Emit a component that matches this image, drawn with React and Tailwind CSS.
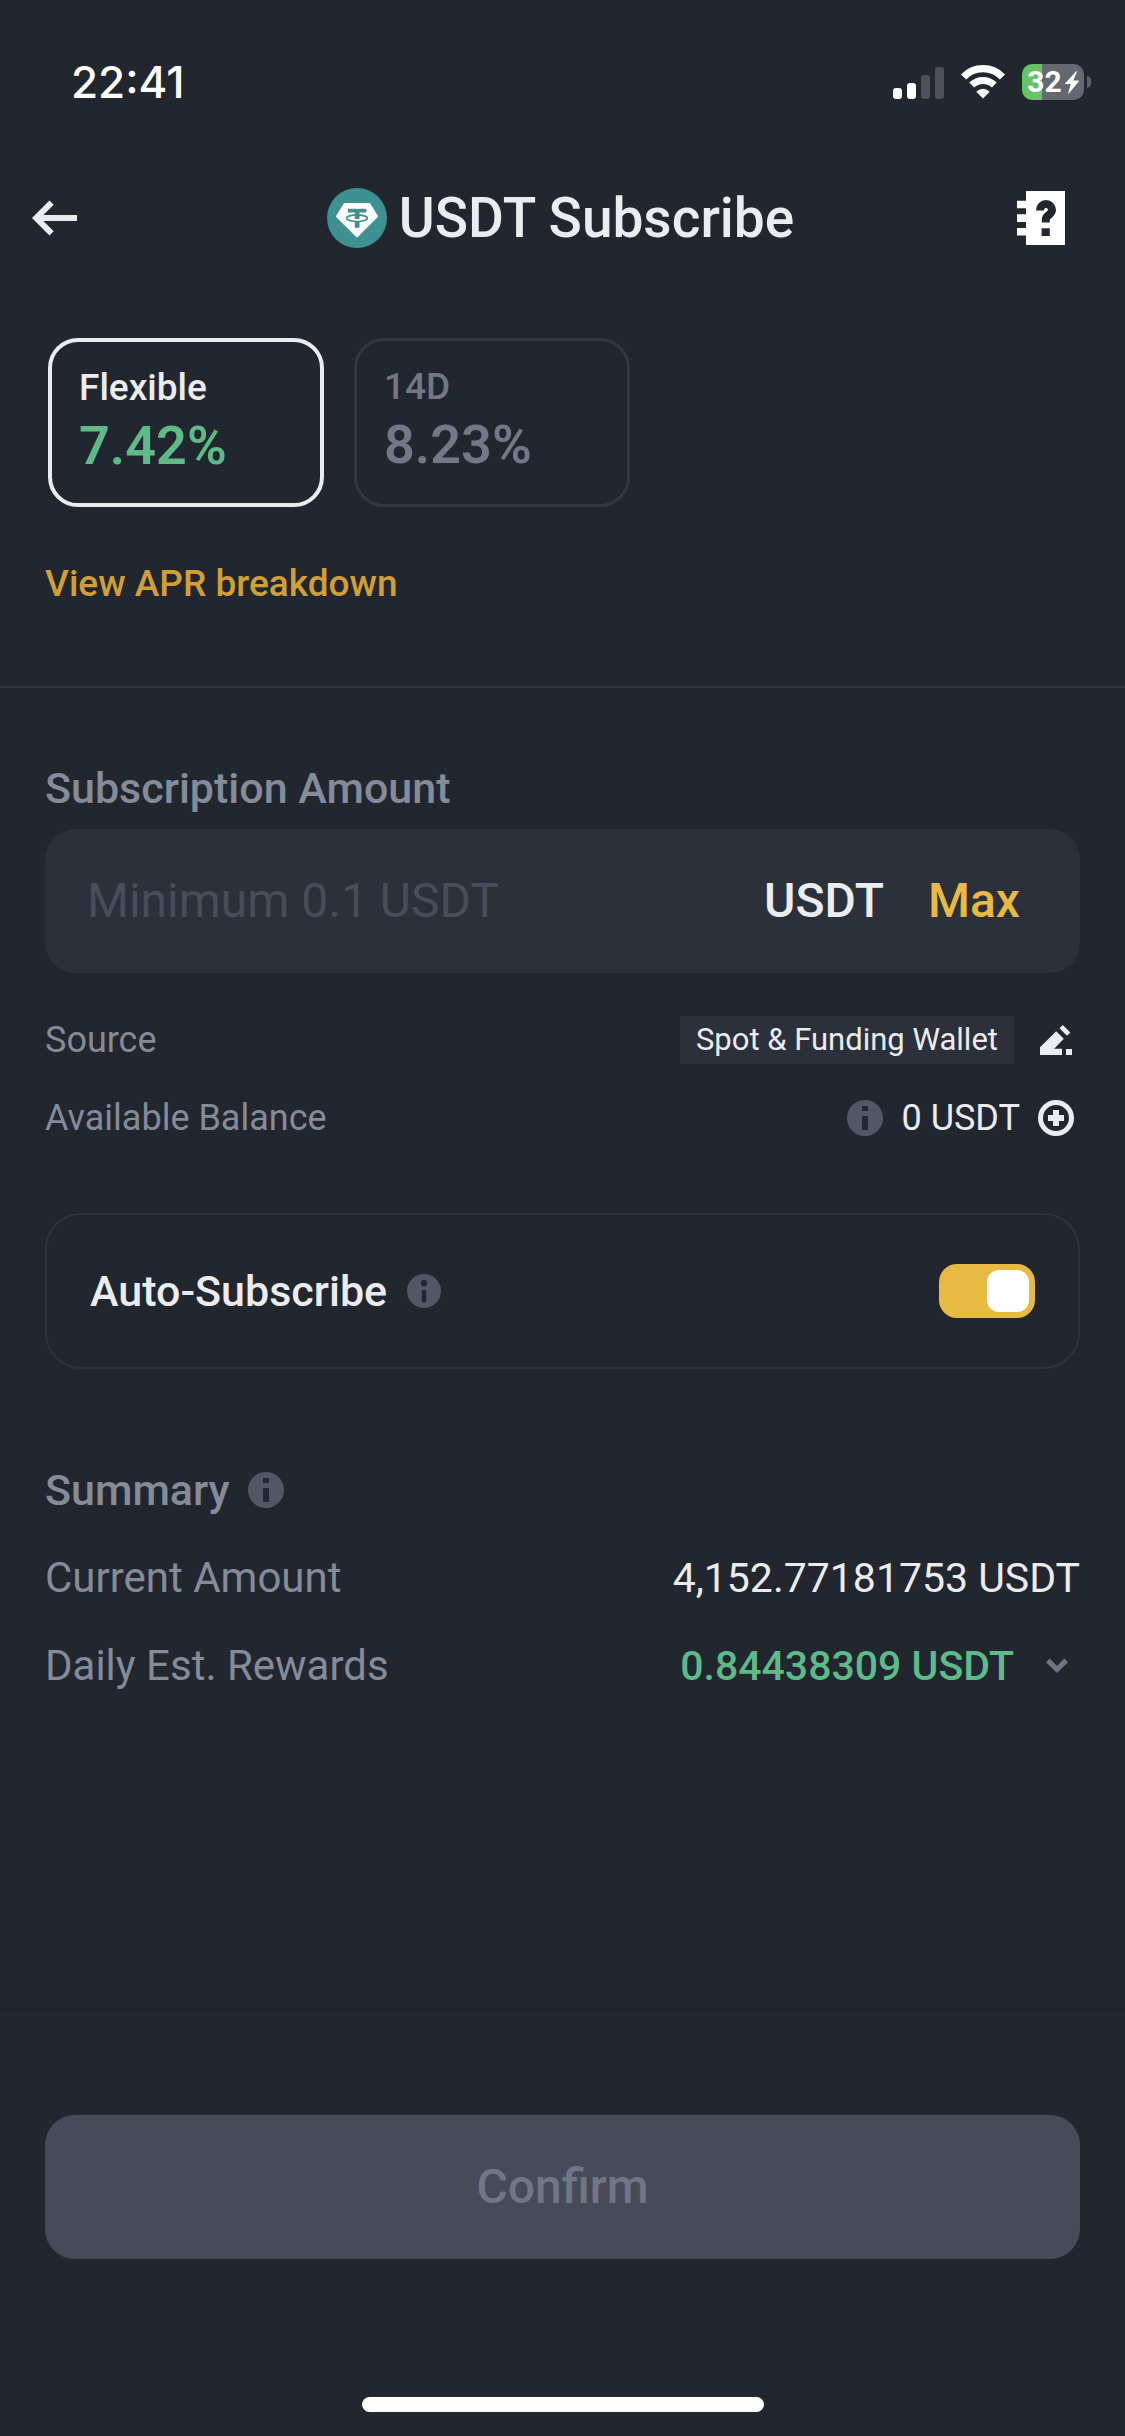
import { useState } from "react";

function SignalIcon() {
  return (
    <svg width="51" height="33" viewBox="0 0 51 33" aria-hidden="true">
      <rect x="0" y="22" width="9" height="11" rx="3" fill="#fff" />
      <rect x="14" y="17" width="9" height="16" rx="3" fill="#fff" />
      <rect x="28" y="9" width="9" height="24" rx="3" fill="#4d5058" />
      <rect x="42" y="1" width="9" height="32" rx="3" fill="#4d5058" />
    </svg>
  );
}

function WifiIcon() {
  return (
    <svg width="46" height="34" viewBox="0 0 46 34" fill="none" aria-hidden="true">
      <path d="M3.600 11.900a27 27 0 0 1 38.800 0" stroke="#fff" strokeWidth="7.200" />
      <path d="M11.700 20.100a16 16 0 0 1 22.600 0" stroke="#fff" strokeWidth="7" />
      <path d="M23 33.400 16.300 26.800q6.700-6 13.400 0Z" fill="#fff" />
    </svg>
  );
}

function BatteryIcon() {
  return (
    <div className="flex items-center gap-[3px]" aria-label="Battery 32 percent, charging">
      <div className="flex h-9 w-[62px] items-center justify-center gap-[3px] rounded-[10px] bg-[linear-gradient(90deg,#65c466_0_20px,#66686f_20px)] text-[30px] leading-9 font-bold text-white">
        32
        <svg width="14" height="23" viewBox="0 0 14 23" fill="#fff" aria-hidden="true">
          <path d="M11.200.3.300 12.200q-.5.900.5.900h5L3.200 22q0 .9.800.3L13.800 10.600q.5-1-.5-1H8.200L12 .8q0-.9-.8-.5Z" />
        </svg>
      </div>
      <svg width="4" height="12" viewBox="0 0 4 12" fill="#5d6068" aria-hidden="true">
        <path d="M0 0a6.200 6.200 0 0 1 0 12Z" />
      </svg>
    </div>
  );
}

function ArrowLeftIcon() {
  return (
    <svg width="46" height="36" viewBox="0 0 46 36" fill="none" stroke="#eaecef" strokeWidth="6" aria-hidden="true">
      <path d="M19.600 2.600 4.200 18l15.400 15.400" />
      <path d="M6 18h39" />
    </svg>
  );
}

function TetherIcon() {
  return (
    <svg width="60" height="60" viewBox="0 0 60 60" aria-hidden="true">
      <circle cx="30" cy="30" r="30" fill="#3f9090" />
      <path d="M17.800 15h24.400q.8 0 1.200.7l7.400 12q.5.900-.2 1.600L31 48.800q-1 .9-2 0L9.400 29.300q-.7-.7-.2-1.600l7.400-12q.4-.7 1.200-.7Z" fill="#fff" />
      <path d="M21 20.800h18.300v3.700H21Z" fill="#3f9090" />
      <path d="M27.800 23h4.700v8h-4.700ZM27.800 33h4.700v6.800h-4.700Z" fill="#3f9090" />
      <ellipse cx="30" cy="30.200" rx="10.300" ry="3.300" fill="none" stroke="#3f9090" strokeWidth="1.600" />
    </svg>
  );
}

function GuideIcon() {
  return (
    <svg width="48" height="54" viewBox="0 0 48 54" aria-hidden="true">
      <path d="M9 0h39v54H9ZM0 9.700h9v7.600H0ZM0 23.300h9V31H0ZM0 37h9v7.600H0Z" fill="#fff" />
      <path d="M23 19.500V19a6 6 0 0 1 12 0c0 5-6.200 5-6.200 9.500v3" fill="none" stroke="#22262e" strokeWidth="8" />
      <path d="M24.600 37.300h8.200V45h-8.200Z" fill="#22262e" />
    </svg>
  );
}

function InfoIcon() {
  return (
    <svg width="36" height="36" viewBox="0 0 36 36" aria-hidden="true">
      <circle cx="18" cy="18" r="18" fill="#515765" />
      <path d="M15 6h6v5h-6ZM15 16h6v14h-6Z" fill="#22262e" />
    </svg>
  );
}

function InfoRoundIcon() {
  return (
    <svg width="34" height="34" viewBox="0 0 34 34" aria-hidden="true">
      <circle cx="17" cy="17" r="17" fill="#515765" />
      <circle cx="17" cy="9.300" r="3.200" fill="#22262e" />
      <rect x="14.800" y="16" width="4.400" height="12.500" rx="0.800" fill="#22262e" />
    </svg>
  );
}

function EditIcon() {
  return (
    <svg width="32" height="30" viewBox="0 0 32 30" fill="#eaecef" aria-hidden="true">
      <path d="M0 30v-7.800L16.200 6.200l7.600 7.600L14.200 23.800H22V30ZM22.800 0l7.600 7.500-3.300 3.300-7.600-7.600ZM26 24h6v6h-6Z" />
    </svg>
  );
}

function AddIcon() {
  return (
    <svg width="36" height="36" viewBox="0 0 36 36" fill="none" stroke="#eaecef" aria-hidden="true">
      <circle cx="18" cy="18" r="15.500" strokeWidth="5" />
      <path d="M10 18h16M18 10v16" strokeWidth="6" />
    </svg>
  );
}

function ChevronDownIcon() {
  return (
    <svg width="22" height="16" viewBox="0 0 22 16" fill="none" stroke="#707485" strokeWidth="5" aria-hidden="true">
      <path d="m1.800 2.400 9.200 9 9.200-9" />
    </svg>
  );
}

const plans = [
  { id: "flexible", name: "Flexible", apr: "7.42%" },
  { id: "14d", name: "14D", apr: "8.23%" },
];

function PlanCard({ plan, selected, onSelect }) {
  return (
    <button
      type="button"
      aria-pressed={selected}
      onClick={onSelect}
      className={
        "flex w-[276px] flex-col rounded-[30px] px-[27px] pt-[22px] pb-[23px] text-left " +
        (selected ? "border-4 border-[#eaecef]" : "border-[3px] border-[#333742]")
      }
    >
      <span className={"text-[37px] leading-[48px] font-medium " + (selected ? "text-[#eaecef]" : "text-[#737787]")}>
        {plan.name}
      </span>
      <span className={"text-[54px] leading-[68px] font-semibold " + (selected ? "text-[#5fba89]" : "text-[#737787]")}>
        {plan.apr}
      </span>
    </button>
  );
}

export default function App() {
  const [plan, setPlan] = useState("flexible");
  const [amount, setAmount] = useState("");
  const [auto, setAuto] = useState(true);

  return (
    <div className="flex min-h-screen flex-col bg-[#22262e] font-[Roboto,sans-serif] text-[#eaecef]">
      <div className="flex h-[164px] items-center justify-between pr-[34px] pl-[71px]">
        <time className="font-[Inter,sans-serif] text-[44px] leading-[56px] font-medium text-white">22:41</time>
        <div className="flex items-center gap-4">
          <SignalIcon />
          <WifiIcon />
          <BatteryIcon />
        </div>
      </div>

      <header className="grid h-[108px] grid-cols-[1fr_auto_1fr] items-center pr-[60px] pl-8">
        <button type="button" aria-label="Back" className="justify-self-start">
          <ArrowLeftIcon />
        </button>
        <div className="flex items-center gap-3 pl-6">
          <TetherIcon />
          <h1 className="text-[55px] leading-[64px] font-medium">USDT Subscribe</h1>
        </div>
        <button type="button" aria-label="Guide" className="justify-self-end">
          <GuideIcon />
        </button>
      </header>

      <section className="border-b-2 border-[#333742] px-[45px] pt-[66px] pb-[78px]">
        <div className="flex gap-[30px] pl-[3px]">
          {plans.map((p) => (
            <PlanCard key={p.id} plan={p} selected={plan === p.id} onSelect={() => setPlan(p.id)} />
          ))}
        </div>
        <a href="#apr" className="mt-[53px] block w-fit text-[37px] leading-[48px] font-medium text-[#d0a035]">
          View APR breakdown
        </a>
      </section>

      <main className="px-[45px] pt-[76px]">
        <label htmlFor="amount" className="block text-[43px] leading-[48px] font-medium text-[#848c9a]">
          Subscription Amount
        </label>
        <div className="mt-[17px] flex h-36 items-center rounded-[30px] bg-[#2b303b] pr-[60px] pl-[42px] text-[48px] font-medium">
          <input
            id="amount"
            inputMode="decimal"
            value={amount}
            onChange={(e) => setAmount(e.target.value)}
            placeholder="Minimum 0.1 USDT"
            className="min-w-0 flex-1 bg-transparent font-normal outline-none placeholder:text-[#474d59]"
          />
          <span>USDT</span>
          <button type="button" className="ml-11 text-[#e6ba43]">
            Max
          </button>
        </div>

        <div className="mt-[43px] flex h-12 items-center justify-between text-[36px] leading-[48px]">
          <span className="text-[#848c9a]">Source</span>
          <div className="flex items-center gap-[26px] pr-2">
            <span className="bg-[#2b303b] px-4 text-[31px] leading-[48px]">Spot &amp; Funding Wallet</span>
            <button type="button" aria-label="Change source">
              <EditIcon />
            </button>
          </div>
        </div>
        <div className="mt-[30px] flex h-12 items-center justify-between text-[36px] leading-[48px]">
          <span className="text-[#848c9a]">Available Balance</span>
          <div className="flex items-center gap-[18px] pr-1.5">
            <button type="button" aria-label="About available balance">
              <InfoIcon />
            </button>
            <span>0 USDT</span>
            <button type="button" aria-label="Add funds">
              <AddIcon />
            </button>
          </div>
        </div>

        <div className="mt-[71px] flex h-[156px] items-center justify-between rounded-[36px] border-2 border-[#2f333f] px-[43px]">
          <div className="flex items-center gap-5">
            <label htmlFor="auto" className="text-[43px] leading-[48px] font-medium">
              Auto-Subscribe
            </label>
            <button type="button" aria-label="About Auto-Subscribe">
              <InfoRoundIcon />
            </button>
          </div>
          <input
            id="auto"
            type="checkbox"
            role="switch"
            checked={auto}
            onChange={(e) => setAuto(e.target.checked)}
            className="flex h-[54px] w-24 appearance-none rounded-[18px] bg-[#515765] p-1.5 before:h-[42px] before:w-[42px] before:rounded-xl before:bg-white checked:justify-end checked:bg-[#e6ba43]"
          />
        </div>

        <div className="mt-[97px] flex flex-col gap-10 text-[42px] leading-[48px] text-[#848c9a]">
          <div className="flex items-center gap-[18px]">
            <h2 className="text-[43px] leading-[48px] font-medium">Summary</h2>
            <button type="button" aria-label="About summary">
              <InfoIcon />
            </button>
          </div>
          <div className="flex items-center justify-between">
            <span>Current Amount</span>
            <span className="text-[41px] text-[#eaecef]">4,152.77181753 USDT</span>
          </div>
          <div className="flex items-center justify-between">
            <span>Daily Est. Rewards</span>
            <button type="button" aria-label="Show reward details" className="flex items-center gap-8 pr-3 text-[41px] font-medium text-[#5fba89]">
              0.84438309 USDT
              <ChevronDownIcon />
            </button>
          </div>
        </div>
      </main>

      <footer className="mt-auto flex flex-col items-center border-t border-[#1c2028] px-[45px] pt-[105px] pb-6">
        <button type="button" className="h-36 w-full rounded-[30px] bg-[#454b58] text-[48px] font-medium text-[#707685]">
          Confirm
        </button>
        <div className="mt-[138px] h-[15px] w-[402px] rounded-full bg-white" />
      </footer>
    </div>
  );
}
